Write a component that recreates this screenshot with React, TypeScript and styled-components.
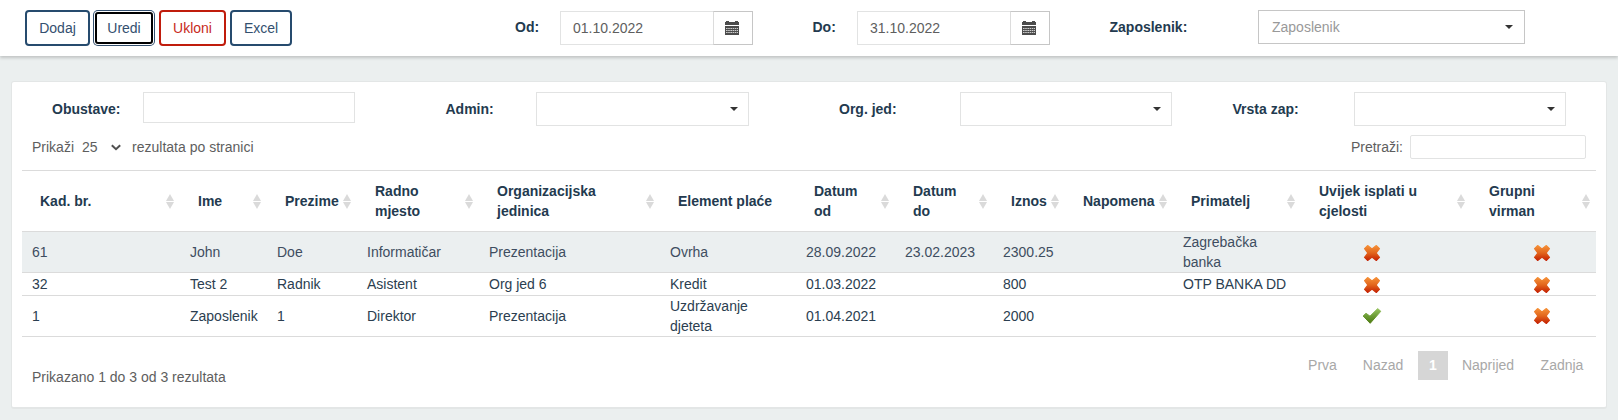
import React from 'react';
import styled, { createGlobalStyle, css } from 'styled-components';

const Global = createGlobalStyle`
  *, *::before, *::after { box-sizing: border-box; }
  body {
    margin: 0;
    background: #ebefef;
    font: 14px/20px "Liberation Sans", Arial, sans-serif;
    color: #5e5e5e;
  }
  input, button, select { font: inherit; }
`;

const Page = styled.div`
  height: 420px;
  overflow: hidden;
`;

const TopBar = styled.header`
  display: flex;
  height: 56px;
  padding: 10px 0 0 25px;
  background: #fff;
  box-shadow: 0 2px 3px rgba(0, 0, 0, 0.18);
`;

const Actions = styled.div`
  display: flex;
  gap: 4px;
  width: 490px;
`;

const Button = styled.button<{ $width: number; $danger?: boolean; $focused?: boolean }>`
  width: ${p => p.$width}px;
  height: 36px;
  padding: 0;
  border: 2px solid ${p => (p.$danger ? '#c01c0c' : '#264b6e')};
  border-radius: 4px;
  background: #fff;
  color: ${p => (p.$danger ? '#c72a1c' : '#34506f')};
  line-height: 32px;
  ${p => p.$focused && css`
    height: 32px;
    margin: 2px 2px 2px 1px;
    border-color: #000;
    border-radius: 3px;
    box-shadow: 0 0 0 1px #fff, 0 0 0 2px #34506f;
    line-height: 28px;
  `}
`;

const Label = styled.label<{ $width: number }>`
  width: ${p => p.$width}px;
  padding-top: 7px;
  color: #233a4f;
  font-weight: 700;
`;

const DateField = styled.div`
  display: flex;
  width: 193px;
  height: 34px;
  margin-top: 1px;
`;

const DateText = styled.div`
  width: 153px;
  padding: 7px 12px;
  border: 1px solid #e2e3e3;
  border-right: 0;
  line-height: 18px;
  color: #5e5e5e;
`;

const DateButton = styled.div`
  display: flex;
  align-items: center;
  justify-content: center;
  width: 40px;
  padding-right: 2px;
  border: 1px solid #c6c6c6;
  border-left-color: #dcdcdc;
`;

const Spacer = styled.div<{ $width: number }>`
  width: ${p => p.$width}px;
`;

const Select = styled.div<{ $width: number; $strong?: boolean }>`
  display: flex;
  align-items: center;
  justify-content: space-between;
  width: ${p => p.$width}px;
  height: 34px;
  padding: 0 ${p => (p.$strong ? 11 : 10)}px 0 13px;
  border: 1px solid ${p => (p.$strong ? '#c6c6c6' : '#e2e3e3')};
  background: #fff;
  color: #999;
`;

const Caret = styled.i`
  margin-left: auto;
  border: 4px solid transparent;
  border-top-color: #333;
  border-bottom: 0;
`;

const Card = styled.main`
  width: 1596px;
  height: 328px;
  margin: 25px 0 0 11px;
  padding: 0 10px;
  border: 1px solid #e3e6e6;
  border-bottom-width: 2px;
  border-radius: 3px;
  background: #fff;
`;

const Filters = styled.div`
  display: flex;
  height: 44px;
  padding: 10px 0 0 30px;
`;

const TextInput = styled.input<{ $width: number; $height: number; $radius?: number }>`
  width: ${p => p.$width}px;
  height: ${p => p.$height}px;
  border: 1px solid #e2e3e3;
  border-radius: ${p => p.$radius ?? 0}px;
  background: #fff;
`;

const ListTools = styled.div`
  display: flex;
  justify-content: space-between;
  height: 44px;
  padding: 9px 10px 0 10px;
`;

const ToolGroup = styled.div<{ $gap: number }>`
  display: flex;
  align-items: center;
  height: 24px;
  gap: ${p => p.$gap}px;
  svg { margin: 0 3px 0 5.5px; }
`;

const Table = styled.table`
  width: 1574px;
  border-collapse: separate;
  border-spacing: 0;
  table-layout: fixed;
  color: #2b3e50;
`;

const Th = styled.th`
  height: 62px;
  padding: 0 0 0 18px;
  border-top: 1px solid #dbdbdb;
  border-bottom: 1px solid #dbdbdb;
  text-align: left;
  color: #233a4f;
`;

const HeadCell = styled.div`
  display: flex;
  align-items: center;
  justify-content: space-between;
  padding-right: 6px;
  white-space: pre-line;
`;

const SortMark = styled.span`
  display: flex;
  flex: none;
  flex-direction: column;
  gap: 1px;
  padding-top: 1px;
  &::before, &::after { content: ''; border: 4px solid transparent; }
  &::before { border-top: 0; border-bottom: 7px solid #dadada; }
  &::after { border-bottom: 0; border-top: 7px solid #dadada; }
`;

const Row = styled.tr<{ $height: number; $selected?: boolean }>`
  height: ${p => p.$height}px;
  background: ${p => (p.$selected ? '#ebeff0' : '#fff')};
  ${p => p.$selected && css`color: #3e4d60;`}
`;

const Td = styled.td<{ $flag?: boolean }>`
  padding: 0 ${p => (p.$flag ? 0 : 10)}px;
  border-bottom: 1px solid #dbdbdb;
  vertical-align: middle;
  white-space: pre;
  line-height: 20px;
`;

const FlagBox = styled.div<{ $indent: number; $drop: number }>`
  padding: ${p => p.$drop}px 0 0 ${p => p.$indent}px;
  svg { display: block; }
`;

const Footer = styled.footer`
  display: flex;
  justify-content: space-between;
  padding: 14px 0 0 10px;
`;

const Info = styled.div`
  padding-top: 16px;
`;

const Pager = styled.nav`
  display: flex;
  height: 29px;
  color: #a8a8a8;
`;

const PageItem = styled.span<{ $width: number; $active?: boolean }>`
  width: ${p => p.$width}px;
  padding-right: ${p => (p.$active ? 0 : 2)}px;
  line-height: 28px;
  text-align: center;
  ${p => p.$active && css`background: #d6d6d6; color: #fff; font-weight: 700;`}
`;

const CalendarIcon = () => (
  <svg width="14" height="14" viewBox="0 0 14 14" fill="#4c4c4c">
    <path d="M0 1h1V0h3v1h6V0h3v1h1v3H0z" />
    <path d="M0 5h14v9H0z" />
    <path d="M1 7.500h12M1 9.500h12M1 11.500h12" stroke="#fff" strokeWidth=".9" strokeDasharray="1.600 .6" strokeOpacity=".8" />
  </svg>
);

const CrossIcon = () => (
  <svg width="18" height="18" viewBox="0 0 18 18">
    <defs>
      <linearGradient id="cross" gradientUnits="userSpaceOnUse" x1="0" y1="1" x2="0" y2="17">
        <stop offset="0" stopColor="#f7943a" />
        <stop offset=".5" stopColor="#e2651c" />
        <stop offset="1" stopColor="#c21c00" />
      </linearGradient>
    </defs>
    <path d="M4.600 1.600 9 5.100 13.400 1.600 16.400 4.600 13 9 16.400 13.400 13.400 16.400 9 12.900 4.600 16.400 1.600 13.400 5 9 1.600 4.600z" fill="url(#cross)" stroke="url(#cross)" strokeWidth="1.300" strokeLinejoin="round" />
  </svg>
);

const CheckIcon = () => (
  <svg width="20" height="18" viewBox="0 0 20 18">
    <defs>
      <linearGradient id="check" gradientUnits="userSpaceOnUse" x1="0" y1="1" x2="0" y2="17">
        <stop offset="0" stopColor="#9cc765" />
        <stop offset=".5" stopColor="#6c9c35" />
        <stop offset="1" stopColor="#4b770e" />
      </linearGradient>
    </defs>
    <path d="M1.100 9 4 6.300 8 9.200 15.700 1.600 18.800 4.300 8.200 16.300z" fill="url(#check)" stroke="url(#check)" strokeLinejoin="round" />
  </svg>
);

const ChevronIcon = () => (
  <svg width="10" height="7" viewBox="0 0 10 7" fill="none" stroke="#505050" strokeWidth="2">
    <path d="M.8 1.200 5 5.200 9.200 1.200" />
  </svg>
);

const columns: { title: string; width: number; sortable?: boolean }[] = [
  { title: 'Kad. br.', width: 158 },
  { title: 'Ime', width: 87 },
  { title: 'Prezime', width: 90 },
  { title: 'Radno\nmjesto', width: 122 },
  { title: 'Organizacijska\njedinica', width: 181 },
  { title: 'Element plaće', width: 136, sortable: false },
  { title: 'Datum\nod', width: 99 },
  { title: 'Datum\ndo', width: 98 },
  { title: 'Iznos', width: 72 },
  { title: 'Napomena', width: 108 },
  { title: 'Primatelj', width: 128 },
  { title: 'Uvijek isplati u\ncjelosti', width: 170 },
  { title: 'Grupni\nvirman', width: 125 },
];

const rows: { height: number; selected?: boolean; cells: string[]; flags: boolean[]; drop: number }[] = [
  { height: 41, selected: true, drop: 2, cells: ['61', 'John', 'Doe', 'Informatičar', 'Prezentacija', 'Ovrha', '28.09.2022', '23.02.2023', '2300.25', '', 'Zagrebačka\nbanka'], flags: [false, false] },
  { height: 23, drop: 2, cells: ['32', 'Test 2', 'Radnik', 'Asistent', 'Org jed 6', 'Kredit', '01.03.2022', '', '800', '', 'OTP BANKA DD'], flags: [false, false] },
  { height: 41, drop: 0, cells: ['1', 'Zaposlenik', '1', 'Direktor', 'Prezentacija', 'Uzdržavanje\ndjeteta', '01.04.2021', '', '2000', '', ''], flags: [true, false] },
];

export default function App() {
  return (
    <Page>
      <Global />
      <TopBar>
        <Actions>
          <Button $width={65}>Dodaj</Button>
          <Button $width={58} $focused>Uredi</Button>
          <Button $width={67} $danger>Ukloni</Button>
          <Button $width={62}>Excel</Button>
        </Actions>
        <Label $width={45}>Od:</Label>
        <DateField>
          <DateText>01.10.2022</DateText>
          <DateButton><CalendarIcon /></DateButton>
        </DateField>
        <Spacer $width={59.500} />
        <Label $width={44.500}>Do:</Label>
        <DateField>
          <DateText>31.10.2022</DateText>
          <DateButton><CalendarIcon /></DateButton>
        </DateField>
        <Spacer $width={59.500} />
        <Label $width={148.500}>Zaposlenik:</Label>
        <Select $width={267} $strong>Zaposlenik<Caret /></Select>
      </TopBar>
      <Card>
        <Filters>
          <Label $width={91}>Obustave:</Label>
          <TextInput $width={212} $height={31} />
          <Spacer $width={90.5} />
          <Label $width={90.5}>Admin:</Label>
          <Select $width={213}><Caret /></Select>
          <Spacer $width={90} />
          <Label $width={121}>Org. jed:</Label>
          <Select $width={212}><Caret /></Select>
          <Spacer $width={60.500} />
          <Label $width={121.500}>Vrsta zap:</Label>
          <Select $width={212}><Caret /></Select>
        </Filters>
        <ListTools>
          <ToolGroup $gap={8}>
            <span>Prikaži</span>
            <span>25</span>
            <ChevronIcon />
            <span>rezultata po stranici</span>
          </ToolGroup>
          <ToolGroup $gap={7}>
            <span>Pretraži:</span>
            <TextInput $width={176} $height={24} $radius={2} />
          </ToolGroup>
        </ListTools>
        <Table>
          <colgroup>{columns.map(c => <col key={c.title} width={c.width} />)}</colgroup>
          <thead>
            <tr>
              {columns.map(c => (
                <Th key={c.title}>
                  <HeadCell>{c.title}{c.sortable !== false && <SortMark />}</HeadCell>
                </Th>
              ))}
            </tr>
          </thead>
          <tbody>
            {rows.map((r, i) => (
              <Row key={i} $height={r.height} $selected={r.selected}>
                {r.cells.map((c, j) => <Td key={j}>{c}</Td>)}
                {r.flags.map((f, j) => (
                  <Td key={`flag${j}`} $flag>
                    <FlagBox $indent={f ? 61 : 62} $drop={r.drop}>{f ? <CheckIcon /> : <CrossIcon />}</FlagBox>
                  </Td>
                ))}
              </Row>
            ))}
          </tbody>
        </Table>
        <Footer>
          <Info>Prikazano 1 do 3 od 3 rezultata</Info>
          <Pager>
            <PageItem $width={53}>Prva</PageItem>
            <PageItem $width={68}>Nazad</PageItem>
            <PageItem $width={30} $active>1</PageItem>
            <PageItem $width={82}>Naprijed</PageItem>
            <PageItem $width={66}>Zadnja</PageItem>
          </Pager>
        </Footer>
      </Card>
    </Page>
  );
}
